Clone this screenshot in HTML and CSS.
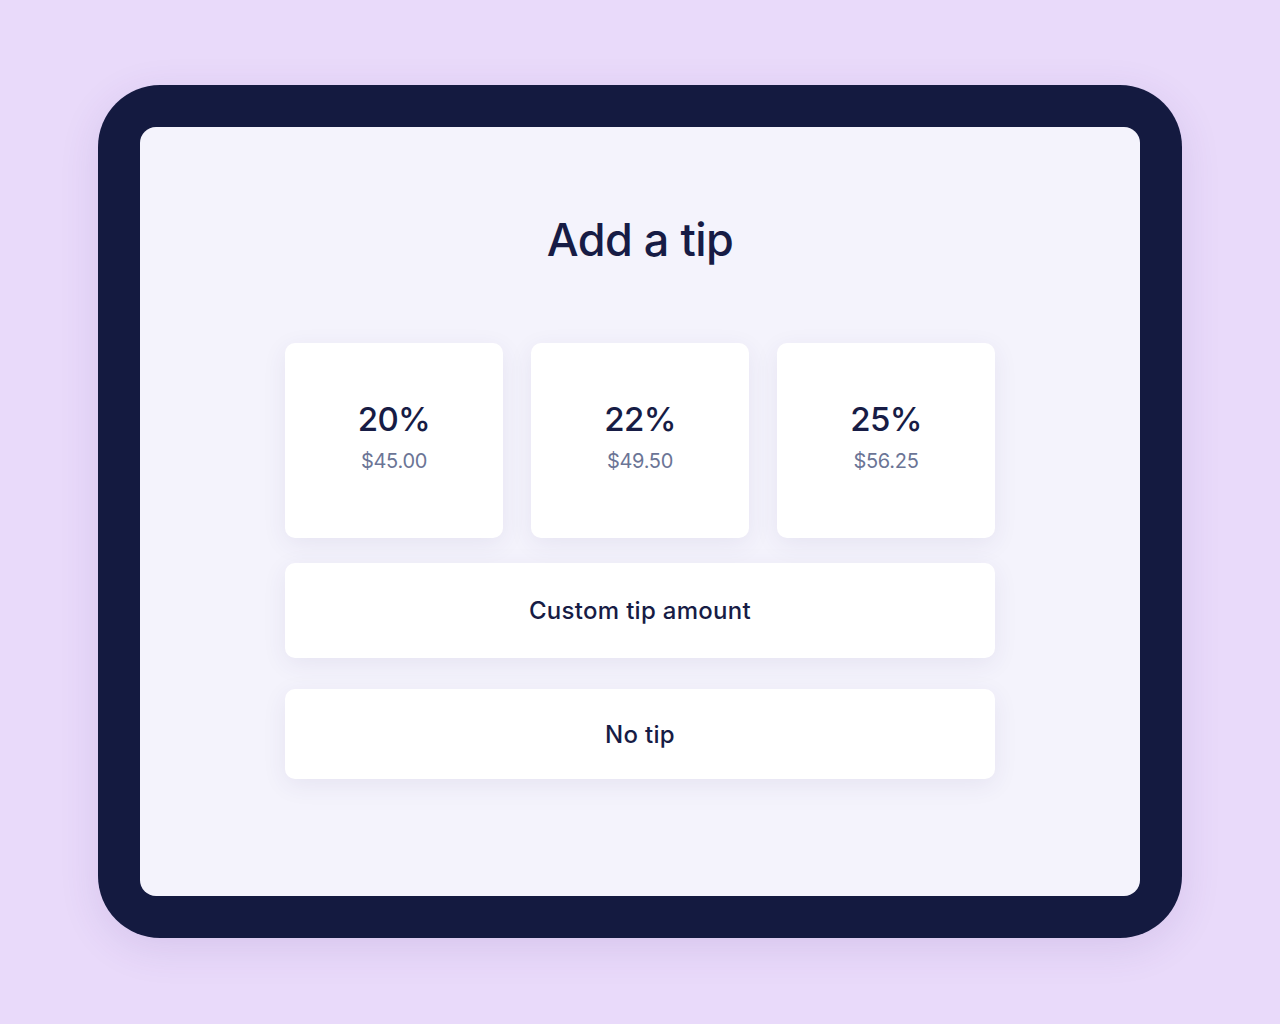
FILE: index.html
```html
<!DOCTYPE html>
<html>
<head>
<meta charset="utf-8">
<link rel="stylesheet" href="styles.css">
</head>
<body>
<div class="device">
  <div class="screen">
    <h1 class="title">Add a tip</h1>
    <div class="options">
      <div class="tiles">
        <div class="tile"><div class="pct">20%</div><div class="amt">$45.00</div></div>
        <div class="tile"><div class="pct">22%</div><div class="amt">$49.50</div></div>
        <div class="tile"><div class="pct">25%</div><div class="amt">$56.25</div></div>
      </div>
      <div class="btn custom">Custom tip amount</div>
      <div class="btn none">No tip</div>
    </div>
  </div>
</div>
</body>
</html>
```
FILE: styles.css
```css
html, body { margin: 0; padding: 0; }
body {
  background: #e9dafa;
  width: 1280px;
  height: 1024px;
  box-sizing: border-box;
  padding: 85px 98px 86px;
  font-family: Inter, "Noto Sans", sans-serif;
  color: #171c45;
}
.device {
  height: 853px;
  box-sizing: border-box;
  background: #141a40;
  border-radius: 62px;
  padding: 42px;
  box-shadow: 0 10px 40px rgba(80, 50, 140, 0.12);
}
.screen {
  height: 100%;
  background: #f4f3fc;
  border-radius: 16px;
  display: flex;
  flex-direction: column;
  align-items: center;
}
.title {
  margin: 88px 0 0;
  font-size: 45px;
  line-height: 50px;
  font-weight: 500;
  letter-spacing: -0.5px;
}
.options {
  width: 710px;
  margin-top: 78px;
  display: flex;
  flex-direction: column;
}
.tiles {
  display: flex;
  gap: 28px;
}
.tile, .btn {
  background: #fff;
  border-radius: 10px;
  box-shadow: 0 6px 24px rgba(60, 50, 120, 0.08);
}
.tile {
  flex: 1;
  height: 195px;
  display: flex;
  flex-direction: column;
  align-items: center;
  padding-top: 56px;
  box-sizing: border-box;
}
.pct {
  font-size: 33px;
  line-height: 40px;
  font-weight: 500;
  letter-spacing: -0.6px;
}
.amt {
  margin-top: 10px;
  font-size: 20px;
  line-height: 24px;
  color: #6b7596;
  letter-spacing: -0.3px;
}
.btn {
  display: flex;
  align-items: center;
  justify-content: center;
  font-size: 24px;
  font-weight: 500;
  letter-spacing: 0.3px;
}
.custom { margin-top: 25px; height: 95px; }
.none { margin-top: 31px; height: 90px; }
```
